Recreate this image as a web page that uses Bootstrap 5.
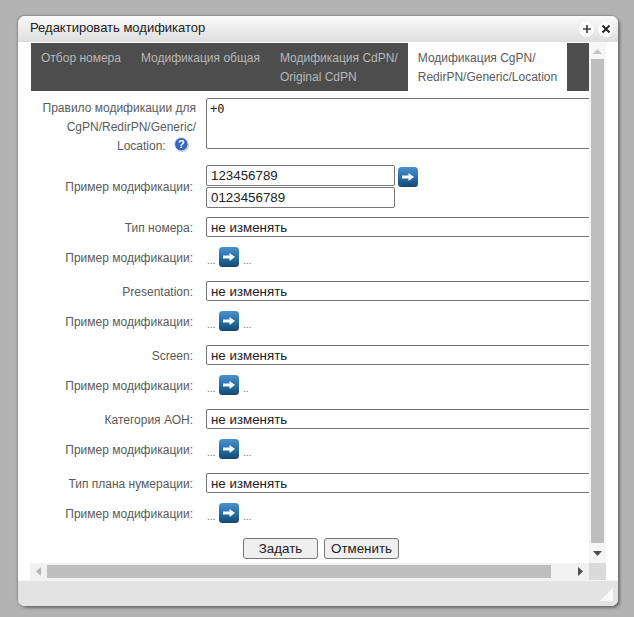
<!DOCTYPE html>
<html lang="ru">
<head>
<meta charset="utf-8">
<title>Редактировать модификатор</title>
<link href="https://cdn.jsdelivr.net/npm/bootstrap@5.3.0/dist/css/bootstrap.min.css" rel="stylesheet">
<style>
html,body{height:100%}
body{background:#b3b3b3;font-family:"Liberation Sans",Arial,sans-serif;font-size:12px;color:#5a5a5a;padding:16px 16px 11px 18px;overflow:hidden}
.dlg{width:600px;height:590px;background:#fff;border-radius:7px;box-shadow:-1px -1px 2px #8a8a8a,2px 2px 3px #6b6b6b;overflow:hidden}
.dlg-head{height:26px;flex:none;padding:0 5px 0 12px;background:linear-gradient(#fafafa,#dedede);color:#222;font-size:13px}
.dlg-title{padding-bottom:2px}
.head-btn{width:15px;height:15px;border-radius:50%;background:#fff;margin-left:4px}
.dlg-mid{height:521px;flex:none;padding:1px 12px 0 13px}
.pane{width:558px;overflow:hidden}
.tabsbar{height:48px;background:#4d4d4d}
.tabitem{color:#b8b8b8;padding:6px 10px 0;line-height:19px;white-space:nowrap}
.tabitem.on{background:#fff;color:#5a5a5a}
.formgrid{width:760px;padding-top:7px}
.frow{display:grid;grid-template-columns:165px 1fr;column-gap:10px;align-items:center;margin:0}
.frow-top{height:51px;align-items:start}
.frow-pair{margin-top:16px}
.lbl{text-align:right;line-height:18px;padding:2px 3px 0 0;margin:0}
.frow-pair .lbl{padding-top:0}
.r-ex .lbl{line-height:17px;padding-top:3px}
.lbl.multi{padding:1px 0 0;line-height:19px;white-space:nowrap}
.fld.form-control{font-family:"Liberation Sans",Arial,sans-serif;font-size:13.33px;color:#222;border:1px solid #767676;border-radius:2px;padding:0 4px;min-height:0;height:20px;line-height:18px;box-shadow:none;background:#fff}
.fld.tall{height:21px;line-height:18px;padding-bottom:1px}
.ta.form-control{font-family:"DejaVu Sans Mono",monospace;font-size:12px;line-height:18px;height:51px;min-height:0;padding:1px 3px;resize:none;color:#222;border:1px solid #767676;border-radius:2px}
.short{width:189px}
.sel{width:540px}
.stack{gap:1px}
.arrow-next{margin:2px 0 -1px 3px}
.r-sel{height:20px;margin-top:14px}
.r-sel.after-pair{margin-top:9px}
.r-ex{height:20px;margin-top:10px}
.dots{color:#6a6a6a;font-size:10px;line-height:12px;align-self:flex-end}
.dots.lead-d{width:13px;padding-left:1px}
.dots.tail-d{margin-left:4px}
.arr{width:20px;height:20px;flex:none;display:block}
.help{width:15px;height:15px;display:inline-block;vertical-align:-2px;margin:0 7px 0 5px}
.acts{width:580px;margin-top:15px;gap:6px}
.act{width:75px;height:21px;padding:0;font-size:13.33px;line-height:19px;color:#222;background:#efefef;border:1px solid #767676;border-radius:3px}
.vs{width:17px;flex:none;background:#f6f6f6}
.vs-thumb{flex:1 1 auto;background:#bebebe;margin:0 2px}
.sb-up{height:16px;flex:none}
.sb-down{height:20px;flex:none}
.hs-wrap{height:17px;flex:none;margin:0 12px}
.hs{width:559px;height:17px;background:#f1f1f1}
.hs-thumb{width:504px;height:13px;background:#bebebe}
.hs-left{width:17px;flex:none}
.hs-right{width:18px;flex:none}
.corner{width:17px;background:#dadada}
.dlg-foot{height:26px;flex:none;background:#e3e3e3;border-top:1px solid #f2f2f2;padding:0 5px 5px 0}
</style>
</head>
<body>
<div class="dlg d-flex flex-column">
  <div class="dlg-head d-flex align-items-center">
    <span class="flex-grow-1 dlg-title">Редактировать модификатор</span>
    <span class="head-btn d-flex align-items-center justify-content-center"><svg width="10" height="10" viewBox="0 0 10 10"><path d="M5 1v8M1 5h8" stroke="#444" stroke-width="1.7"/></svg></span>
    <span class="head-btn d-flex align-items-center justify-content-center"><svg width="10" height="10" viewBox="0 0 10 10"><path d="M1.5 1.5l7 7M8.5 1.5l-7 7" stroke="#222" stroke-width="1.8"/></svg></span>
  </div>
  <div class="dlg-mid d-flex">
    <div class="pane">
      <div class="tabsbar d-flex">
        <span class="tabitem">Отбор номера</span>
        <span class="tabitem">Модификация общая</span>
        <span class="tabitem">Модификация CdPN/<br>Original CdPN</span>
        <span class="tabitem on">Модификация CgPN/<br>RedirPN/Generic/Location</span>
      </div>
      <div class="formgrid">
        <div class="frow frow-top">
          <label class="lbl multi">Правило модификации для<br>CgPN/RedirPN/Generic/<br>Location: <svg class="help" viewBox="0 0 15 15"><circle cx="8" cy="8" r="7" fill="#c4c4c4"/><circle cx="7.3" cy="7.3" r="6.7" fill="#3568bd" stroke="#e3ecf8" stroke-width=".9"/><text x="7.3" y="11.2" text-anchor="middle" font-family="Liberation Sans" font-weight="700" font-size="11" fill="#fff">?</text></svg></label>
          <textarea class="ta form-control" rows="2">+0</textarea>
        </div>
        <div class="frow frow-pair">
          <label class="lbl">Пример модификации:</label>
          <div class="d-flex flex-column stack">
            <div class="d-flex align-items-start">
              <input class="fld tall form-control short" value="123456789">
              <svg class="arr arrow-next" viewBox="0 0 20 20"><use href="#arrow"/></svg>
            </div>
            <input class="fld tall form-control short" value="0123456789">
          </div>
        </div>
        <div class="frow r-sel after-pair"><label class="lbl">Тип номера:</label><input class="fld form-control sel" value="не изменять"></div>
        <div class="frow r-ex"><label class="lbl">Пример модификации:</label><div class="d-flex align-items-center"><span class="dots lead-d">...</span><svg class="arr" viewBox="0 0 20 20"><use href="#arrow"/></svg><span class="dots tail-d">...</span></div></div>
        <div class="frow r-sel"><label class="lbl">Presentation:</label><input class="fld form-control sel" value="не изменять"></div>
        <div class="frow r-ex"><label class="lbl">Пример модификации:</label><div class="d-flex align-items-center"><span class="dots lead-d">...</span><svg class="arr" viewBox="0 0 20 20"><use href="#arrow"/></svg><span class="dots tail-d">...</span></div></div>
        <div class="frow r-sel"><label class="lbl">Screen:</label><input class="fld form-control sel" value="не изменять"></div>
        <div class="frow r-ex"><label class="lbl">Пример модификации:</label><div class="d-flex align-items-center"><span class="dots lead-d">...</span><svg class="arr" viewBox="0 0 20 20"><use href="#arrow"/></svg><span class="dots tail-d">..</span></div></div>
        <div class="frow r-sel"><label class="lbl">Категория АОН:</label><input class="fld form-control sel" value="не изменять"></div>
        <div class="frow r-ex"><label class="lbl">Пример модификации:</label><div class="d-flex align-items-center"><span class="dots lead-d">...</span><svg class="arr" viewBox="0 0 20 20"><use href="#arrow"/></svg><span class="dots tail-d">...</span></div></div>
        <div class="frow r-sel"><label class="lbl">Тип плана нумерации:</label><input class="fld form-control sel" value="не изменять"></div>
        <div class="frow r-ex"><label class="lbl">Пример модификации:</label><div class="d-flex align-items-center"><span class="dots lead-d">...</span><svg class="arr" viewBox="0 0 20 20"><use href="#arrow"/></svg><span class="dots tail-d">...</span></div></div>
        <div class="d-flex justify-content-center acts"><button class="act" type="button">Задать</button><button class="act" type="button">Отменить</button></div>
      </div>
    </div>
    <div class="vs d-flex flex-column">
      <div class="sb-up d-flex align-items-center justify-content-center"><svg width="9" height="5"><path d="M0 5l4.5-5L9 5z" fill="#c4c4c4"/></svg></div>
      <div class="vs-thumb"></div>
      <div class="sb-down d-flex align-items-center justify-content-center"><svg width="9" height="5"><path d="M0 0l4.5 5L9 0z" fill="#505050"/></svg></div>
    </div>
  </div>
  <div class="hs-wrap d-flex">
    <div class="hs d-flex align-items-center">
      <div class="hs-left d-flex justify-content-center"><svg width="5" height="9"><path d="M5 0L0 4.5 5 9z" fill="#b5b5b5"/></svg></div>
      <div class="hs-thumb"></div>
      <div class="hs-right d-flex justify-content-center ms-auto"><svg width="5" height="9"><path d="M0 0l5 4.5L0 9z" fill="#505050"/></svg></div>
    </div>
    <div class="corner"></div>
  </div>
  <div class="dlg-foot d-flex align-items-end justify-content-end">
    <svg width="13" height="13"><path d="M13 0v13H0z" fill="#fafafa"/></svg>
  </div>
</div>
<svg width="0" height="0" class="d-block">
  <defs>
    <linearGradient id="gb" x1="0" y1="0" x2="0" y2="1"><stop offset="0" stop-color="#4a90cc"/><stop offset=".5" stop-color="#2a70ab"/><stop offset="1" stop-color="#154671"/></linearGradient>
    <symbol id="arrow" viewBox="0 0 20 20"><rect width="20" height="20" rx="3.5" fill="url(#gb)"/><path d="M4 8.5h6.5V6l5.5 4-5.5 4v-2.5H4z" fill="#fff"/></symbol>
  </defs>
</svg>
</body>
</html>
